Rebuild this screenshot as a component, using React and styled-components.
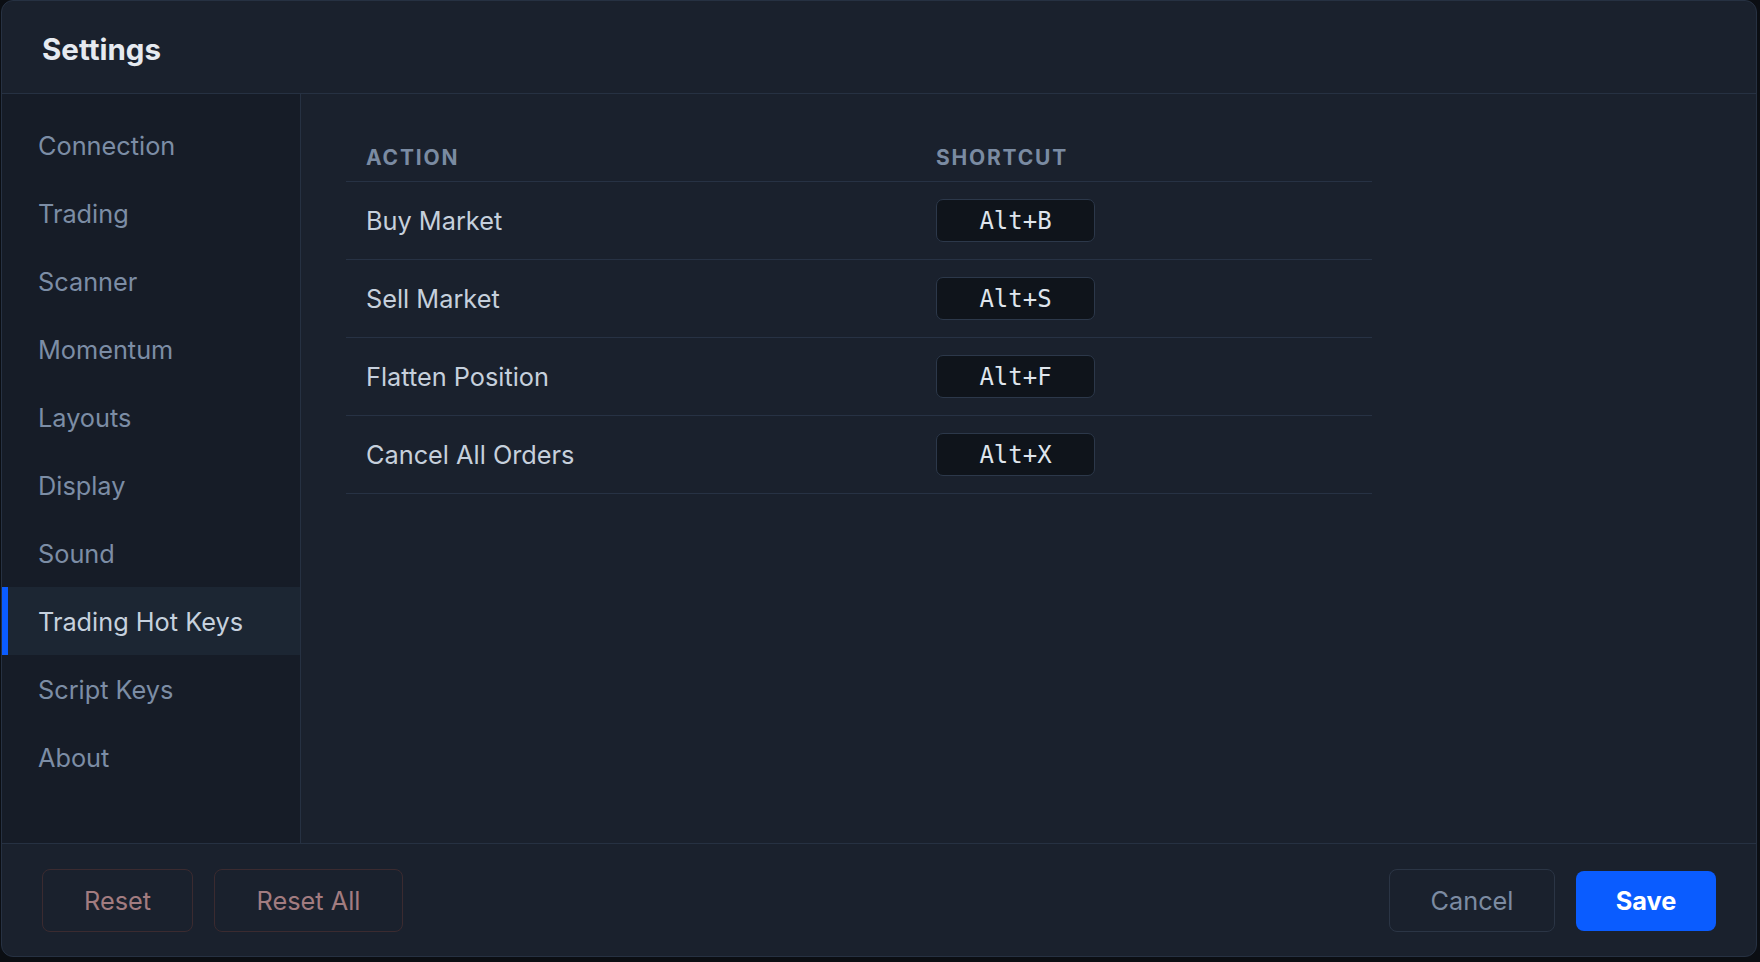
import React from "react";
import styled, { createGlobalStyle } from "styled-components";

const GlobalStyle = createGlobalStyle`
  html, body {
    margin: 0;
    padding: 0;
    background: #0b0e13;
  }
  * {
    box-sizing: border-box;
  }
`;

const Page = styled.div`
  height: 962px;
  padding: 0 3px 5px 1px;
  font-family: Inter, "Noto Sans", sans-serif;
`;

const Modal = styled.div`
  height: 100%;
  display: flex;
  flex-direction: column;
  background: #1a212d;
  border: 1px solid #263142;
  border-radius: 12px;
  overflow: hidden;
`;

const Header = styled.div`
  height: 93px;
  display: flex;
  align-items: center;
  padding: 4px 0 0 40px;
  border-bottom: 1px solid #263142;
`;

const Title = styled.h1`
  margin: 0;
  font-size: 29.5px;
  font-weight: 700;
  color: #e6eaf0;
`;

const Body = styled.div`
  flex: 1;
  display: flex;
  min-height: 0;
`;

const Sidebar = styled.nav`
  width: 299px;
  padding-top: 17px;
  background: #161c27;
  border-right: 1px solid #263142;
`;

const NavItem = styled.div`
  height: 68px;
  display: flex;
  align-items: center;
  padding-left: 30px;
  border-left: 6px solid ${(p) => (p.active ? "#0b5cff" : "transparent")};
  background: ${(p) => (p.active ? "#1c2633" : "transparent")};
  color: ${(p) => (p.active ? "#c6d1de" : "#7c8da5")};
  font-size: 25.3px;
`;

const Content = styled.div`
  flex: 1;
  padding: 36px 45px;
`;

const Table = styled.div`
  width: 1026px;
`;

const Row = styled.div`
  display: grid;
  grid-template-columns: 570px 1fr;
  align-items: center;
  border-bottom: 1px solid #273244;
  min-height: ${(p) => (p.head ? "auto" : "78px")};
  padding: ${(p) => (p.head ? "16px 0 11px" : "0")};
`;

const HeadCell = styled.div`
  padding: 0 20px;
  font-size: 21px;
  line-height: 24px;
  font-weight: 700;
  letter-spacing: 1.8px;
  color: #7a8ba2;
`;

const Cell = styled.div`
  padding: 0 20px;
  font-size: 25.3px;
  color: #c6d0dc;
`;

const Kbd = styled.span`
  display: inline-flex;
  align-items: center;
  justify-content: center;
  width: 159px;
  height: 43px;
  background: #0f141b;
  border: 1.5px solid #2c384a;
  border-radius: 7px;
  font-family: "DejaVu Sans Mono", "Liberation Mono", monospace;
  font-size: 24px;
  color: #dfe5ec;
`;

const Footer = styled.div`
  display: flex;
  align-items: center;
  justify-content: space-between;
  padding: 25px 40px 24px;
  border-top: 1px solid #263142;
`;

const Group = styled.div`
  display: flex;
  align-items: center;
  gap: 21px;
`;

const Button = styled.button`
  height: ${(p) => (p.primary ? "60px" : "63px")};
  width: ${(p) => p.w}px;
  border-radius: 8px;
  font-family: Inter, "Noto Sans", sans-serif;
  font-size: 25.3px;
  font-weight: ${(p) => (p.primary ? 700 : 400)};
  background: ${(p) => (p.primary ? "#0a5cff" : "transparent")};
  color: ${(p) =>
    p.primary ? "#ffffff" : p.danger ? "#a27c80" : "#7c8ba2"};
  border: ${(p) =>
    p.primary
      ? "none"
      : p.danger
      ? "1.5px solid #3b2b30"
      : "1.5px solid #2b3545"};
  cursor: pointer;
`;

const navItems = [
  "Connection",
  "Trading",
  "Scanner",
  "Momentum",
  "Layouts",
  "Display",
  "Sound",
  "Trading Hot Keys",
  "Script Keys",
  "About",
];

const hotKeys = [
  { action: "Buy Market", key: "Alt+B" },
  { action: "Sell Market", key: "Alt+S" },
  { action: "Flatten Position", key: "Alt+F" },
  { action: "Cancel All Orders", key: "Alt+X" },
];

const App = () => {
  return (
    <Page>
      <GlobalStyle />
      <Modal>
        <Header>
          <Title>Settings</Title>
        </Header>
        <Body>
          <Sidebar>
            {navItems.map((item) => (
              <NavItem key={item} active={item === "Trading Hot Keys"}>
                {item}
              </NavItem>
            ))}
          </Sidebar>
          <Content>
            <Table>
              <Row head>
                <HeadCell>ACTION</HeadCell>
                <HeadCell>SHORTCUT</HeadCell>
              </Row>
              {hotKeys.map((hk) => (
                <Row key={hk.action}>
                  <Cell>{hk.action}</Cell>
                  <Cell>
                    <Kbd>{hk.key}</Kbd>
                  </Cell>
                </Row>
              ))}
            </Table>
          </Content>
        </Body>
        <Footer>
          <Group>
            <Button danger w={151}>Reset</Button>
            <Button danger w={189}>Reset All</Button>
          </Group>
          <Group>
            <Button w={166}>Cancel</Button>
            <Button primary w={140}>Save</Button>
          </Group>
        </Footer>
      </Modal>
    </Page>
  );
};

export default App;
